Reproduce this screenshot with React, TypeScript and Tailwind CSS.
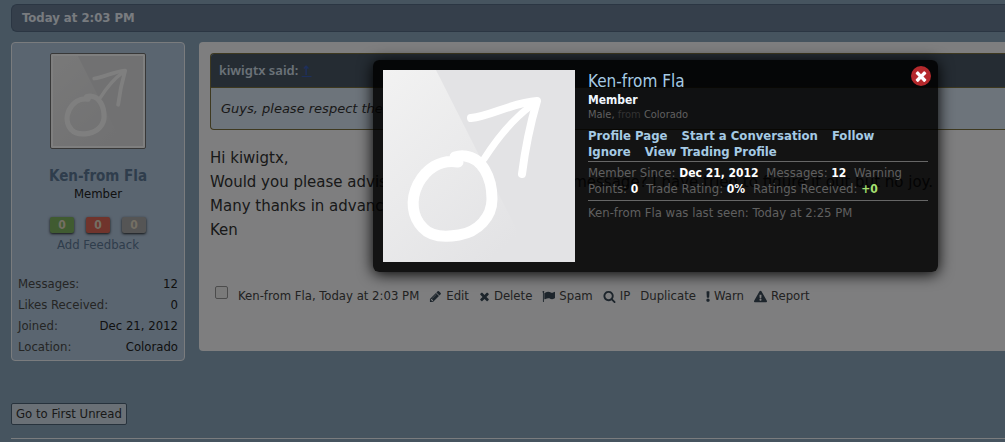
import type { ReactNode } from 'react';
import { FaExclamation, FaExclamationTriangle } from 'react-icons/fa';

interface Stat {
    label: string;
    value: string;
}

interface Control {
    label: string;
    icon?: ReactNode;
}

const glyphs = {
    pencil: 'M491 1536l91-91-235-235-91 91v107h128v128h107zm523-928q0-22-22-22-10 0-17 7l-542 542q-7 7-7 17 0 22 22 22 10 0 17-7l542-542q7-7 7-17zm-54-192l416 416-832 832h-416v-416zm683 96q0 53-37 90l-166 166-416-416 166-165q36-38 90-38 53 0 91 38l235 234q37 39 37 91z',
    times: 'M1490 1322q0 40-28 68l-136 136q-28 28-68 28t-68-28l-294-294-294 294q-28 28-68 28t-68-28l-136-136q-28-28-28-68t28-68l294-294-294-294q-28-28-28-68t28-68l136-136q28-28 68-28t68 28l294 294 294-294q28-28 68-28t68 28l136 136q28 28 28 68t-28 68l-294 294 294 294q28 28 28 68z',
    flag: 'M320 256q0 72-64 110v1266q0 13-9.5 22.5t-22.5 9.5h-64q-13 0-22.5-9.5t-9.5-22.5v-1266q-64-38-64-110 0-53 37.5-90.5t90.5-37.5 90.5 37.5 37.5 90.5zm1472 64v763q0 25-12.5 38.5t-39.5 27.5q-215 116-369 116-61 0-123.5-22t-108.5-48-115.5-48-142.5-22q-192 0-464 146-17 9-33 9-26 0-45-19t-19-45v-742q0-32 31-55 21-14 79-43 236-120 421-120 107 0 200 29t219 88q38 19 88 19 54 0 117.5-21t110-47 88-47 54.5-21q26 0 45 19t19 45z',
    search: 'M1216 832q0-185-131.5-316.5t-316.5-131.5-316.5 131.5-131.5 316.5 131.5 316.5 316.5 131.5 316.5-131.5 131.5-316.5zm512 832q0 52-38 90t-90 38q-54 0-90-38l-343-342q-179 124-399 124-143 0-273.5-55.5t-225-150-150-225-55.5-273.5 55.5-273.5 150-225 225-150 273.5-55.5 273.5 55.5 225 150 150 225 55.5 273.5q0 220-124 399l343 343q37 37 37 90z',
};

function Glyph({ name, className }: { name: keyof typeof glyphs; className: string }) {
    return (
        <svg viewBox="0 0 1792 1792" fill="currentColor" className={className} aria-hidden="true">
            <path d={glyphs[name]} />
        </svg>
    );
}

const userStats: Stat[] = [
    { label: 'Messages:', value: '12' },
    { label: 'Likes Received:', value: '0' },
    { label: 'Joined:', value: 'Dec 21, 2012' },
    { label: 'Location:', value: 'Colorado' },
];

const controls: Control[] = [
    { label: 'Edit', icon: <Glyph name="pencil" className="size-[13px]" /> },
    { label: 'Delete', icon: <Glyph name="times" className="-mx-px size-[13px]" /> },
    { label: 'Spam', icon: <Glyph name="flag" className="size-[13px]" /> },
    { label: 'IP', icon: <Glyph name="search" className="size-[13px]" /> },
    { label: 'Duplicate' },
    { label: 'Warn', icon: <FaExclamation className="h-[11px] w-1" /> },
    { label: 'Report', icon: <FaExclamationTriangle className="size-[13px]" /> },
];

const cardLinks = ['Profile Page', 'Start a Conversation', 'Follow', 'Ignore', 'View Trading Profile'];

function MaleAvatar({ className }: { className: string }) {
    return (
        <svg viewBox="0 0 192 192" className={className} role="img" aria-label="Ken-from Fla">
            <defs>
                <linearGradient id="shine" x1="0" y1="0" x2="0.7" y2="1">
                    <stop offset="0" stopColor="#f2f2f2" />
                    <stop offset="1" stopColor="#e3e3e5" />
                </linearGradient>
            </defs>
            <rect width="192" height="192" fill="#e3e3e5" />
            <path d="M0 0H53L150 192H0Z" fill="url(#shine)" />
            <g fill="none" stroke="#fff" strokeLinecap="round" strokeLinejoin="round">
                <path d="M75 92C57 89 43 99 35 114C27 130 29 147 40 158C49 168 64 167 76 165C95 162 109 147 109 129C109 107 99 88 82 86C78 85 75 86 72 87" strokeWidth="11" />
                <path d="M101 89C113 70 127 51 149 35" strokeWidth="7" />
                <path d="M88 48C108 46 128 33 154 31C147 55 142 80 139 104" strokeWidth="8" />
            </g>
        </svg>
    );
}

function UserPanel() {
    return (
        <aside className="w-[174px] shrink-0 rounded border border-[#f4f8fc] bg-[#b5cae0] px-1.5 pt-2.5 pb-[3px] text-center text-[13px]">
            <a href="#avatar" className="inline-block rounded-xs border border-[#707070] bg-white p-0.5">
                <MaleAvatar className="size-[90px]" />
            </a>
            <h3 className="mt-3 text-[15px] leading-[18px] font-bold text-[#5e7a98]">
                <a href="#member">Ken-from Fla</a>
            </h3>
            <p className="leading-[18px] text-[#222]">Member</p>
            <div className="mt-3.5 flex justify-center gap-3 text-[12px] leading-4 font-bold text-[#e8dfc8]">
                <span className="w-6 rounded-xs bg-[#80b763] shadow-sm shadow-black/70">0</span>
                <span className="w-6 rounded-xs bg-[#e06858] shadow-sm shadow-black/70">0</span>
                <span className="w-6 rounded-xs bg-[#aaaaaa] shadow-sm shadow-black/70">0</span>
            </div>
            <a href="#feedback" className="mt-1 block leading-4 text-[#5e7a98]">Add Feedback</a>
            <dl className="mt-5 leading-[21px]">
                {userStats.map(stat => (
                    <div key={stat.label} className="flex justify-between">
                        <dt className="text-[#4a4a4a]">{stat.label}</dt>
                        <dd className="text-[#222]">{stat.value}</dd>
                    </div>
                ))}
            </dl>
        </aside>
    );
}

function Post() {
    return (
        <article className="min-w-0 flex-1 self-start rounded-l bg-[#fcfdff] pt-[11px] pb-[45px] pl-[11px]">
            <blockquote className="overflow-hidden rounded-l-sm border border-r-0 border-[#7d7340] bg-[#dbe8f6] font-['DejaVu_Sans',sans-serif]">
                <div className="border-b border-[#7d7340] bg-[#4b5866] px-2 font-['Noto_Sans',sans-serif] text-[13px] leading-8 font-semibold text-[#d8e4f0]">
                    kiwigtx said:{' '}
                    <a href="#quoted" className="font-['DejaVu_Sans_Condensed','DejaVu_Sans',sans-serif] text-[#3a5fb8] underline">
                        ↑
                    </a>
                </div>
                <p className="px-2.5 text-[13px] leading-[41px] whitespace-nowrap text-[#333] italic">
                    Guys, please respect the forum rules when you post.
                </p>
            </blockquote>
            <div className="mt-4 font-['DejaVu_Sans',sans-serif] text-[15px] leading-6 whitespace-nowrap text-[#333]">
                <p>Hi kiwigtx,</p>
                <p>Would you please advise me how to send you a message? I have tried to figure it out but no joy.</p>
                <p>Many thanks in advance</p>
                <p>Ken</p>
            </div>
            <footer className="mt-11 flex flex-wrap items-center pl-[5px] text-[13px] leading-5 text-[#444]">
                <input
                    type="checkbox"
                    aria-label="Select this post"
                    className="mr-2.5 size-[13px] appearance-none self-start rounded-xs border border-[#999] bg-[#f4f4f4] checked:bg-[#3a4a58]"
                />
                <a href="#member">Ken-from Fla</a>,&nbsp;<a href="#post">Today at 2:03 PM</a>
                {controls.map(({ label, icon }) => (
                    <a key={label} href="#control" className="ml-2.5 flex items-center gap-1 [&_svg]:text-[#3a4a58]">
                        {icon}
                        {label}
                    </a>
                ))}
            </footer>
        </article>
    );
}

function MemberCard() {
    return (
        <section
            role="dialog"
            aria-label="Ken-from Fla"
            className="absolute top-[60px] left-[373px] flex w-[565px] gap-[13px] rounded-md bg-black/85 p-2.5 text-[13px] text-[#606060] shadow-[0_2px_15px_#000]"
        >
            <MaleAvatar className="size-48 shrink-0" />
            <div className="min-w-0 flex-1">
                <h3 className="text-[17px] leading-[22px] text-[#a5cae4]">
                    <a href="#member">Ken-from Fla</a>
                </h3>
                <p className="text-[12px] leading-4 font-bold text-[#f0f7ff]">Member</p>
                <p className="text-[11px] leading-[14px]">
                    Male, <span className="text-[#333]">from</span> <a href="#location">Colorado</a>
                </p>
                <nav className="mt-1.5 flex flex-wrap gap-x-3.5 pr-10 leading-4 font-bold text-[#a5cae4]">
                    {cardLinks.map(link => (
                        <a key={link} href="#member">{link}</a>
                    ))}
                </nav>
                <p className="mt-px border-y border-[#666] py-[3px] leading-4 [&_b]:text-[12px]">
                    Member Since: <b className="mr-1 text-white">Dec 21, 2012</b> Messages: <b className="mr-1 text-white">12</b> Warning
                    <br />
                    Points: <b className="mr-1 text-white">0</b> Trade Rating: <b className="mr-1 text-white">0%</b> Ratings Received:{' '}
                    <b className="text-[#a5e070]">+0</b>
                </p>
                <p className="mt-1 leading-4">Ken-from Fla was last seen: Today at 2:25 PM</p>
            </div>
            <button
                type="button"
                aria-label="Close"
                className="absolute top-1.5 right-[7px] flex size-5 items-center justify-center rounded-full bg-[#b5292c] text-white"
            >
                <Glyph name="times" className="size-4" />
            </button>
        </section>
    );
}

export default function App() {
    return (
        <div className="relative min-h-screen overflow-hidden bg-[#8ca9bf] pt-1 pl-[11px] font-['DejaVu_Sans_Condensed','DejaVu_Sans',sans-serif]">
            <h2 className="rounded-l-md border border-r-0 border-[#566d87] bg-[#6a7e96] pl-2.5 text-[13px] leading-[26px] font-bold text-[#f0f7ff]">
                Today at 2:03 PM
            </h2>
            <main className="mt-2.5 flex gap-3.5">
                <UserPanel />
                <Post />
            </main>
            <button
                type="button"
                className="mt-[42px] rounded-xs border border-[#4f6478] bg-[#d4e0ec] px-1 text-[13px] leading-5 text-[#333]"
            >
                Go to First Unread
            </button>
            <hr className="mt-[13px] border-[#f4f8fc]" />
            <div className="absolute inset-0 bg-black/50" />
            <MemberCard />
        </div>
    );
}
